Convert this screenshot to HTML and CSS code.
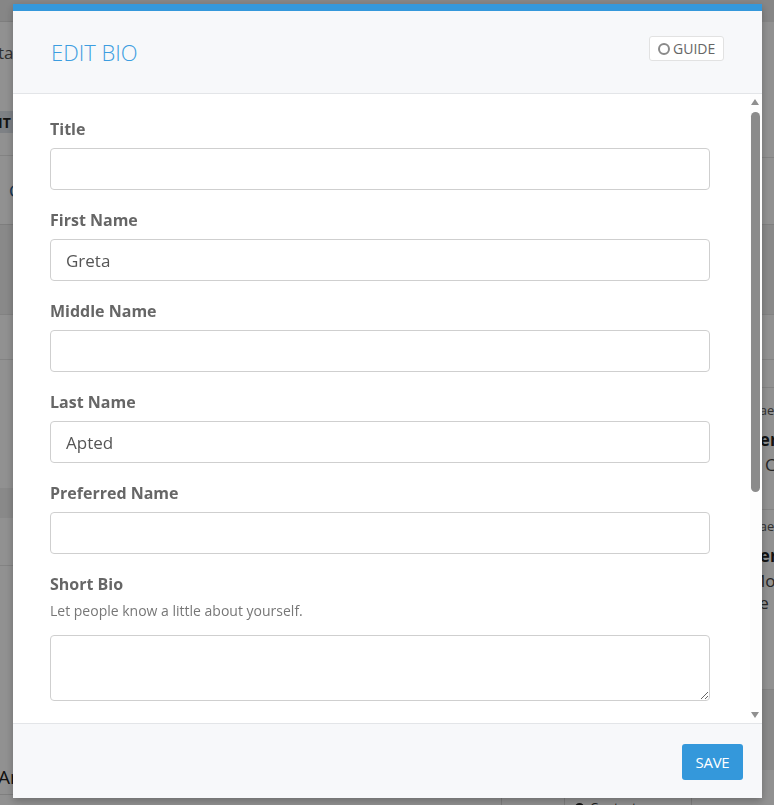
FILE: index.html
```html
<!DOCTYPE html>
<html>
<head>
<meta charset="utf-8">
<link rel="stylesheet" href="styles.css">
</head>
<body>
<div class="page">
  <div class="col-left">
    <div class="r r-a"></div>
    <div class="r r-b"><span class="bg-text">ta</span></div>
    <div class="r r-c"><span class="bg-bold">IT</span></div>
    <div class="r r-d"></div>
    <div class="r r-e"><span class="bg-link">C</span></div>
    <div class="r r-f"></div>
    <div class="r r-g"></div>
    <div class="r r-h"></div>
    <div class="r r-i"></div>
    <div class="r r-j"></div>
    <div class="r r-k"></div>
    <div class="r r-l"><span class="bg-big">Ar</span></div>
    <div class="r r-m">
      <div class="cell c1"></div>
      <div class="cell c2"></div>
      <div class="cell c3"><span class="dot"></span>Contact</div>
      <div class="cell c4"></div>
    </div>
  </div>
  <div class="col-right">
    <div class="q q-a"></div>
    <div class="q q-b"></div>
    <div class="q q-c"></div>
    <div class="q q-d"></div>
    <div class="q q-e"></div>
    <div class="q q-f"></div>
    <div class="q q-g">
      <span class="bg-small">Mae</span>
      <span class="bg-strong">Ter</span>
      <span class="bg-text2">t: C</span>
    </div>
    <div class="q q-h">
      <span class="bg-small">Mae</span>
      <span class="bg-strong">Ter</span>
      <span class="bg-text2">Mon</span>
      <span class="bg-text2">Te</span>
    </div>
    <div class="q q-i"></div>
  </div>
</div>
<div class="backdrop"></div>

<div class="modal">
  <div class="modal-header">
    <h1 class="modal-title">EDIT BIO</h1>
    <button class="guide-btn"><span class="guide-icon"></span>GUIDE</button>
  </div>
  <div class="modal-body">
    <div class="body-content">
      <div class="field">
        <label class="label">Title</label>
        <input class="input" type="text" value="">
      </div>
      <div class="field">
        <label class="label">First Name</label>
        <input class="input" type="text" value="Greta">
      </div>
      <div class="field">
        <label class="label">Middle Name</label>
        <input class="input" type="text" value="">
      </div>
      <div class="field">
        <label class="label">Last Name</label>
        <input class="input" type="text" value="Apted">
      </div>
      <div class="field">
        <label class="label">Preferred Name</label>
        <input class="input" type="text" value="">
      </div>
      <div class="field">
        <label class="label">Short Bio</label>
        <p class="help">Let people know a little about yourself.</p>
        <textarea class="textarea"></textarea>
      </div>
      <div class="field">
        <label class="label">Pronouns</label>
        <input class="input" type="text" value="">
      </div>
    </div>
    <div class="scrollbar">
      <div class="sb-btn"><span class="tri-up"></span></div>
      <div class="sb-track"><div class="sb-thumb"></div></div>
      <div class="sb-btn sb-btn-down"><span class="tri-down"></span></div>
    </div>
  </div>
  <div class="modal-footer">
    <button class="save-btn">SAVE</button>
  </div>
</div>
</body>
</html>
```

FILE: styles.css
```css
* { box-sizing: border-box; }
html, body { margin: 0; padding: 0; }
body {
  width: 774px;
  height: 805px;
  overflow: hidden;
  font-family: "Open Sans", "Liberation Sans", sans-serif;
  background: #fff;
}

/* ---------- background page ---------- */
.page {
  display: grid;
  grid-template-columns: 750px 24px;
  height: 805px;
  color: #333;
}
.col-left, .col-right { display: flex; flex-direction: column; }
.r, .q { flex: none; display: flex; align-items: center; }
.r-a { height: 22px; background: #ececec; border-bottom: 1px solid #ddd; }
.r-b { height: 89px; align-items: flex-start; padding-top: 19px; }
.bg-text { font-size: 17px; line-height: 24px; color: #555; margin-left: -2px; }
.r-c { height: 22px; background: #dde3ea; }
.bg-bold { font-size: 14px; font-weight: 700; color: #222; margin-left: -2px; }
.r-d { height: 23px; border-bottom: 1px solid #e6e6e6; }
.r-e { height: 69px; border-bottom: 1px solid #ddd; }
.bg-link { font-size: 17px; color: #1c5d93; margin-left: 9px; }
.r-f { height: 90px; background: #f1f1f1; border-bottom: 1px solid #e4e4e4; }
.r-g { height: 45px; border-bottom: 1px solid #e6e6e6; }
.r-h { height: 128px; }
.r-i { height: 30px; background: #f1f1f1; }
.r-j { height: 48px; border-bottom: 1px solid #e6e6e6; }
.r-k { height: 194px; }
.r-l { height: 34px; }
.bg-big { font-size: 19px; color: #222; margin-left: -2px; }
.r-m { height: 11px; align-items: stretch; border-top: 1px solid #e0e0e0; overflow: visible; }
.cell { border-right: 1px solid #ddd; font-size: 13px; color: #333; padding: 3px 10px 0; white-space: nowrap; height: 30px; }
.c1 { width: 502px; }
.c2 { width: 63px; }
.c3 { width: 127px; }
.c4 { flex: 1; border-right: none; }
.dot { display: inline-block; width: 9px; height: 9px; border-radius: 50%; background: #222; margin-right: 6px; }

.q-a { height: 22px; background: #ececec; }
.q-b { height: 136px; border-bottom: 1px solid #e6e6e6; }
.q-c { height: 67px; border-bottom: 1px solid #e0e0e0; }
.q-d { height: 90px; background: #f1f1f1; border-bottom: 1px solid #e4e4e4; }
.q-e { height: 45px; border-bottom: 1px solid #e6e6e6; }
.q-f { height: 28px; border-bottom: 1px solid #e6e6e6; }
.q-g { height: 122px; flex-direction: column; align-items: flex-start; justify-content: flex-start; padding-top: 12px; border-bottom: 1px solid #e6e6e6; overflow: hidden; white-space: nowrap; }
.q-h { height: 180px; flex-direction: column; align-items: flex-start; justify-content: flex-start; padding-top: 6px; border-bottom: 1px solid #e6e6e6; overflow: hidden; white-space: nowrap; }
.q-i { height: 80px; background: #f1f1f1; }
.bg-small { font-size: 13px; color: #555; line-height: 20px; margin-left: -2px; }
.bg-strong { font-size: 17px; font-weight: 700; color: #222; line-height: 28px; margin-top: 6px; }
.bg-text2 { font-size: 17px; color: #444; line-height: 22px; }

.backdrop {
  position: fixed;
  inset: 0;
  background: rgba(0, 0, 0, 0.43);
}

/* ---------- modal ---------- */
.modal {
  position: fixed;
  left: 13px;
  top: 4px;
  width: 749px;
  height: 794px;
  display: flex;
  flex-direction: column;
  background: #fff;
  border-top: 7px solid #3498db;
  box-shadow: 0 3px 8px rgba(0, 0, 0, 0.25);
}
.modal-header {
  flex: none;
  height: 83px;
  display: flex;
  align-items: center;
  justify-content: space-between;
  padding: 0 38px 0 38px;
  background: #f7f8fa;
  border-bottom: 1px solid #e3e5e8;
}
.modal-title {
  margin: 0;
  font-size: 22px;
  font-weight: 300;
  color: #3c9de0;
}
.guide-btn {
  align-self: flex-start;
  margin-top: 25px;
  display: flex;
  align-items: center;
  height: 25px;
  width: 75px;
  padding: 0 0 0 8px;
  background: #fff;
  border: 1px solid #e2e2e2;
  border-radius: 3px;
  font-family: "Open Sans", "Liberation Sans", sans-serif;
  font-size: 14px;
  color: #666;
}
.guide-icon {
  flex: none;
  width: 12px;
  height: 12px;
  border: 2px solid #8a8a8a;
  border-radius: 50%;
  margin-right: 3px;
}

.modal-body {
  flex: 1;
  min-height: 0;
  display: flex;
}
.body-content {
  flex: 1;
  overflow: hidden;
  padding: 23px 40px 30px 37px;
}
.scrollbar {
  flex: none;
  width: 12px;
  display: flex;
  flex-direction: column;
  background: #fdfdfd;
}
.sb-btn {
  flex: none;
  height: 18px;
  padding: 5px 0 0 1px;
}
.sb-btn-down { padding-top: 0; height: 11px; }
.tri-up, .tri-down {
  display: block;
  width: 0;
  height: 0;
  border-left: 4.5px solid transparent;
  border-right: 4.5px solid transparent;
}
.tri-up { border-bottom: 6px solid #8f8f8f; }
.tri-down { border-top: 6px solid #8f8f8f; }
.sb-track {
  flex: 1;
  padding: 0 2px 0 1px;
}
.sb-thumb {
  height: 380px;
  background: #8b8b8b;
  border-radius: 5px;
}

.field { margin-bottom: 18px; display: flex; flex-direction: column; }
.label {
  display: block;
  font-size: 16px;
  font-weight: 700;
  line-height: 24px;
  color: #666;
  margin-bottom: 7px;
}
.help {
  margin: -2px 0 14px;
  font-size: 14px;
  line-height: 20px;
  color: #777;
}
.input {
  display: block;
  width: 100%;
  height: 42px;
  padding: 0 15px;
  border: 1px solid #cfcfcf;
  border-radius: 4px;
  font-family: "Open Sans", "Liberation Sans", sans-serif;
  font-size: 17px;
  color: #555;
  background: #fff;
  outline: none;
}
.textarea {
  display: block;
  width: 100%;
  height: 66px;
  padding: 8px 15px;
  border: 1px solid #cfcfcf;
  border-radius: 4px;
  font-family: "Open Sans", "Liberation Sans", sans-serif;
  font-size: 16px;
  color: #555;
  outline: none;
}

.modal-footer {
  flex: none;
  height: 75px;
  display: flex;
  align-items: center;
  justify-content: flex-end;
  padding: 0 19px;
  background: #f7f8fa;
  border-top: 1px solid #e3e5e8;
}
.save-btn {
  height: 36px;
  width: 61px;
  padding: 0;
  border: none;
  border-radius: 3px;
  background: #3498db;
  color: #fff;
  font-family: "Open Sans", "Liberation Sans", sans-serif;
  font-size: 15px;
  letter-spacing: -0.3px;
  margin-top: 1px;
}
```
